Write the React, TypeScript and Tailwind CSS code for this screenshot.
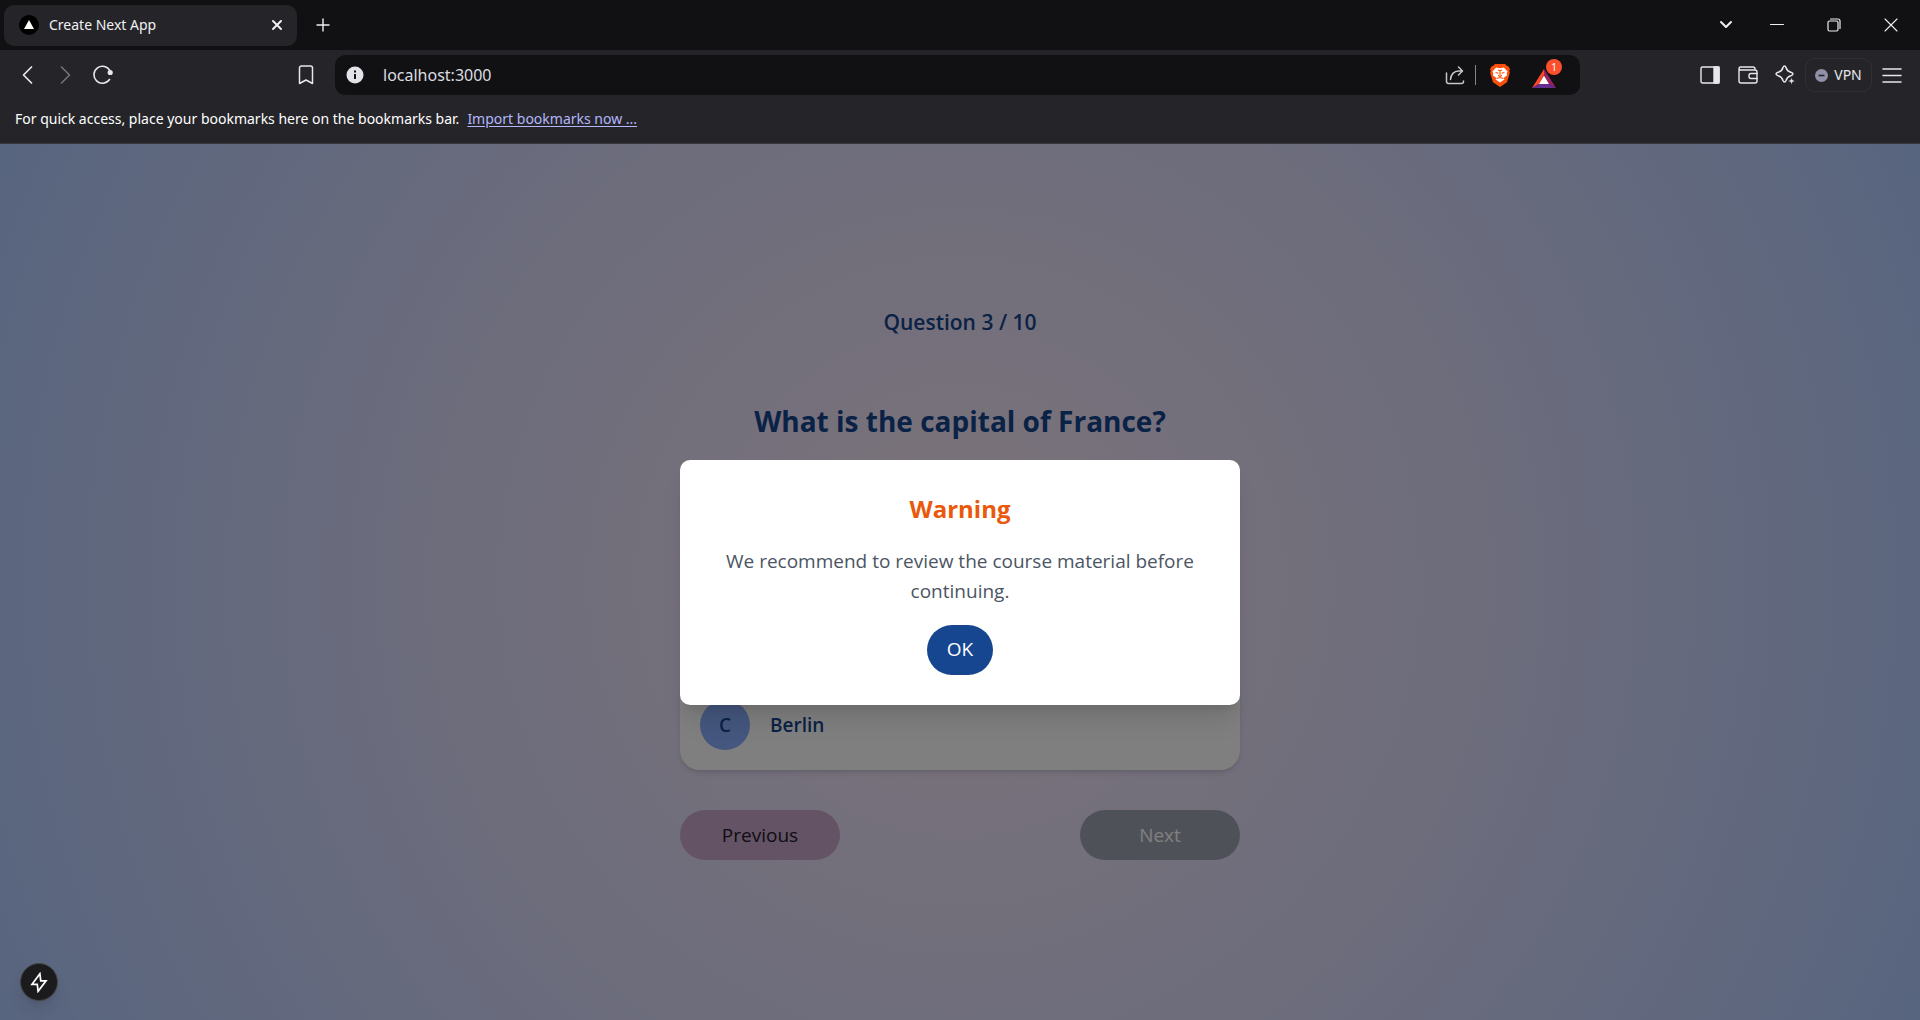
import type { ReactNode } from "react";

function IconButton({ label, className, children }: { label: string; className: string; children: ReactNode }) {
  return (
    <button type="button" aria-label={label} className={`flex shrink-0 items-center justify-center ${className}`}>
      {children}
    </button>
  );
}

const stroke = { fill: "none", stroke: "currentColor", strokeLinecap: "round", strokeLinejoin: "round" } as const;

function TabStrip() {
  return (
    <div className="flex h-[50px] items-center bg-[#111113] pl-1 text-[#f0f0f3]">
      <div className="flex h-[41px] w-[293px] items-center rounded-[10px] bg-[#252529] pl-[15px] pr-[10px]">
        <svg viewBox="0 0 20 20" className="size-5 shrink-0">
          <circle cx="10" cy="10" r="10" fill="#000" />
          <path d="M10 5 15 14H5Z" fill="#fff" />
        </svg>
        <span className="ml-[10px] flex-1 text-sm">Create Next App</span>
        <IconButton label="Close tab" className="size-5">
          <svg viewBox="0 0 12 12" className="size-3" {...stroke} strokeWidth="2">
            <path d="M2 2l8 8M10 2l-8 8" />
          </svg>
        </IconButton>
      </div>
      <IconButton label="New tab" className="ml-4 size-5">
        <svg viewBox="0 0 14 14" className="size-[14px]" {...stroke} strokeWidth="1.4">
          <path d="M7 1v12M1 7h12" />
        </svg>
      </IconButton>
      <div className="ml-auto flex h-full items-center">
        <IconButton label="Search tabs" className="h-full w-[44px]">
          <svg viewBox="0 0 14 10" className="h-[10px] w-[14px]" {...stroke} strokeWidth="2">
            <path d="M2 2l5 5 5-5" />
          </svg>
        </IconButton>
        <IconButton label="Minimize" className="h-full w-[58px]">
          <svg viewBox="0 0 14 14" className="size-[14px]" {...stroke} strokeWidth="1">
            <path d="M.5 6.5h13" />
          </svg>
        </IconButton>
        <IconButton label="Restore" className="h-full w-[56px]">
          <svg viewBox="0 0 14 14" className="size-[14px]" {...stroke} strokeWidth="1.2">
            <rect x="1" y="3" width="10" height="10" rx="1.5" />
            <path d="M3.5 1H11a2 2 0 0 1 2 2v7.500" />
          </svg>
        </IconButton>
        <IconButton label="Close window" className="h-full w-[58px]">
          <svg viewBox="0 0 14 14" className="size-[14px]" {...stroke} strokeWidth="1.1">
            <path d="M1 1l12 12M13 1 1 13" />
          </svg>
        </IconButton>
      </div>
    </div>
  );
}

function ShieldsLogo() {
  return (
    <svg viewBox="0 0 20 23" className="h-[23px] w-5">
      <path d="M5 0h10l2 2h1l2 3-.7 2 .5 2-2.800 9.200L10 23l-7-4.800L.2 9l.5-2L0 5l2-3h1Z" fill="#fb4f0b" />
      <path d="M6 3.500l4 .8 4-.8 3.700 4.200-1 1.300.3 2.500-3.200 2.300.6 1.700-4.400 3-4.400-3 .6-1.700L3 11.500 3.300 9l-1-1.300Z" fill="#fff" />
      <g fill="none" stroke="#fb4f0b" strokeWidth="1.100">
        <path d="M8 6l2 .7 2-.7M10 6.500v4.500M5.500 8.500l3 .8M14.500 8.500l-3 .8M8 11.300l2 1.200 2-1.200M6.500 14.500 10 13.500l3.500 1" />
      </g>
    </svg>
  );
}

function AddressBar() {
  return (
    <div className="flex h-10 flex-1 items-center rounded-[10px] bg-[#111113] pl-[11px] pr-[18px]">
      <IconButton label="Site information" className="size-[18px]">
        <svg viewBox="0 0 18 18" className="size-[18px]">
          <circle cx="9" cy="9" r="8.500" fill="#e2e2e8" />
          <path d="M9 8v5" stroke="#111113" strokeWidth="2" />
          <rect x="8" y="4.500" width="2" height="2" fill="#111113" />
        </svg>
      </IconButton>
      <input
        aria-label="Address"
        defaultValue="localhost:3000"
        className="ml-[19px] h-6 flex-1 bg-transparent text-base text-[#dcdce0] outline-none"
      />
      <IconButton label="Share" className="size-5">
        <svg viewBox="0 0 20 20" className="size-5 text-[#c6c6cb]" {...stroke} strokeWidth="1.5">
          <path d="M1.500 8v8.500a2 2 0 0 0 2 2h13a2 2 0 0 0 2-2V16" />
          <path d="M5.500 14.500c.3-5 3.500-8.500 8-8.500h3.500M13.500 2l4 4-4 4" />
        </svg>
      </IconButton>
      <span className="ml-[10px] h-5 w-px bg-[#84848a]" />
      <IconButton label="Brave Shields" className="ml-[14px] h-[23px] w-5">
        <ShieldsLogo />
      </IconButton>
      <button type="button" aria-label="Brave Rewards" className="relative ml-[22px] h-8 w-[30px] shrink-0">
        <svg viewBox="0 0 24 21" className="mt-[6px] h-[21px] w-[24px]">
          <path d="M12 1 0 20 7 16 12 7Z" fill="#ff4724" />
          <path d="M12 1 24 20 17 16 12 7Z" fill="#9e1f63" />
          <path d="M0 20h24l-7-4H7Z" fill="#662d91" />
          <path d="M12 7.500 7 16h10Z" fill="#fff" />
        </svg>
        <span className="absolute right-0 top-0 flex size-4 items-center justify-center rounded-full bg-[#fc4f2c] text-[10px] text-white">
          1
        </span>
      </button>
    </div>
  );
}

function Toolbar() {
  return (
    <div className="flex h-[50px] items-center text-[#e8e8ec]">
      <div className="flex w-[335px] shrink-0 items-center pl-[18px]">
        <IconButton label="Back" className="size-5">
          <svg viewBox="0 0 20 20" className="size-5" {...stroke} strokeWidth="1.700">
            <path d="M13.500 2 5.500 10l8 8" />
          </svg>
        </IconButton>
        <IconButton label="Forward" className="ml-[17px] size-5 text-[#77777c]">
          <svg viewBox="0 0 20 20" className="size-5" {...stroke} strokeWidth="1.500">
            <path d="M6.500 2l8 8-8 8" />
          </svg>
        </IconButton>
        <IconButton label="Reload" className="ml-[18px] size-5">
          <svg viewBox="0 0 20 20" className="size-5" {...stroke} strokeWidth="1.600">
            <path d="M16.500 14.500a8.500 8.500 0 1 1 .6-8.500" />
            <circle cx="17.200" cy="7.500" r="1.800" fill="currentColor" />
          </svg>
        </IconButton>
        <IconButton label="Bookmark" className="ml-auto mr-[19px] size-5">
          <svg viewBox="0 0 20 20" className="size-5" {...stroke} strokeWidth="1.500">
            <path d="M3.500 18V3a2 2 0 0 1 2-2h9a2 2 0 0 1 2 2v15.500L10 15l-6.500 3.500Z" />
          </svg>
        </IconButton>
      </div>
      <AddressBar />
      <div className="flex w-[340px] shrink-0 items-center justify-end pr-[18px]">
        <IconButton label="Sidebar" className="size-5">
          <svg viewBox="0 0 20 20" className="size-5" {...stroke} strokeWidth="1.400">
            <rect x="1" y="2" width="18" height="16" rx="1.500" />
            <path d="M14 2h5v16h-5Z" fill="currentColor" />
          </svg>
        </IconButton>
        <IconButton label="Wallet" className="ml-[18px] size-5">
          <svg viewBox="0 0 20 20" className="size-5" {...stroke} strokeWidth="1.400">
            <path d="M1 3.500A1.500 1.500 0 0 1 2.500 2H15a2 2 0 0 1 2 2v1M1 3.500V16a2 2 0 0 0 2 2h14a2 2 0 0 0 2-2V7a2 2 0 0 0-2-2H2.500A1.500 1.500 0 0 1 1 3.500Z" />
            <path d="M19 8.500h-6a2 2 0 0 0-2 2v1a2 2 0 0 0 2 2h6" />
          </svg>
        </IconButton>
        <IconButton label="Leo AI" className="ml-[17px] size-5">
          <svg viewBox="0 0 20 20" className="size-5" {...stroke} strokeWidth="1.500">
            <path d="M9.500 1c.8 0 1.200.6 1.500 1.500.8 2.900 1.900 4 4.800 4.800 1.200.4 2.200.8 2.200 1.700s-1 1.300-2.200 1.700c-2.900.8-4 1.900-4.800 4.800-.3.900-.7 1.500-1.500 1.500s-1.200-.6-1.500-1.500c-.8-2.900-1.900-4-4.800-4.800C2 10.300 1 9.900 1 9s1-1.300 2.200-1.700c2.900-.8 4-1.900 4.800-4.800C8.300 1.600 8.700 1 9.500 1Z" />
            <path d="M16.500 12.500l1 2.500 2.500 1-2.500 1-1 2.500-1-2.500-2.500-1 2.500-1Z" fill="currentColor" stroke="#252529" strokeWidth=".4" />
          </svg>
        </IconButton>
        <button
          type="button"
          className="ml-[10px] flex h-[34px] w-[67px] shrink-0 items-center justify-center gap-[6px] rounded-[10px] border border-[#303035] text-sm"
        >
          <svg viewBox="0 0 13 13" className="size-[13px]">
            <circle cx="6.500" cy="6.500" r="6.500" fill="#9090a8" />
            <path d="M3.500 6.500h6" stroke="#252529" strokeWidth="1.600" />
          </svg>
          VPN
        </button>
        <IconButton label="Menu" className="ml-[10px] size-5">
          <svg viewBox="0 0 20 20" className="size-5" {...stroke} strokeWidth="1.500">
            <path d="M1 4h18M1 10.500h18M1 17h18" />
          </svg>
        </IconButton>
      </div>
    </div>
  );
}

function BookmarksBar() {
  return (
    <div className="flex h-[44px] items-center gap-2 border-b border-[#39393d] px-[15px] pb-[5px] text-sm text-white">
      <span>For quick access, place your bookmarks here on the bookmarks bar.</span>
      <a href="#import" className="text-[#b3b6fb] underline underline-offset-2">
        Import bookmarks now ...
      </a>
    </div>
  );
}

function Quiz() {
  return (
    <section className="flex w-[560px] flex-col">
      <p className="text-center text-[21px] leading-[36px] font-semibold text-[#14448c]">Question 3 / 10</p>
      <h1 className="mt-[61px] text-center text-[28px] leading-[40px] font-bold text-[#14448c]">
        What is the capital of France?
      </h1>
      <button
        type="button"
        className="mt-[239px] flex items-center gap-5 rounded-[20px] bg-white p-5 text-left font-semibold text-[#14448c] shadow-md"
      >
        <span className="flex size-[50px] items-center justify-center rounded-full bg-[#8aaefd] text-[19px]">C</span>
        <span className="text-[19px]">Berlin</span>
      </button>
      <div className="mt-10 flex justify-between text-[19px]">
        <button type="button" className="h-[50px] w-40 rounded-full bg-[#c6a6ca] text-[#22182a]">
          Previous
        </button>
        <button type="button" className="h-[50px] w-40 rounded-full bg-[#9ca3af] font-medium text-white">
          Next
        </button>
      </div>
    </section>
  );
}

function WarningDialog() {
  return (
    <div className="absolute inset-0 flex items-center justify-center bg-black/50">
      <div
        role="dialog"
        aria-labelledby="warning-title"
        className="flex w-[560px] flex-col items-center rounded-[10px] bg-white p-[30px] text-center shadow-xl"
      >
        <h2 id="warning-title" className="text-2xl leading-[38px] font-bold text-[#ea580c]">
          Warning
        </h2>
        <p className="mt-[18px] text-[19px] leading-[30px] text-[#4b5563]">
          We recommend to review the course material before continuing.
        </p>
        <button type="button" className="mt-[19px] h-[50px] rounded-full bg-[#15468f] px-5 text-[19px] font-medium text-white">
          OK
        </button>
      </div>
    </div>
  );
}

export default function App() {
  return (
    <div className="flex min-h-screen flex-col bg-[#252529] font-['Noto_Sans','Open_Sans',sans-serif]">
      <header>
        <TabStrip />
        <Toolbar />
        <BookmarksBar />
      </header>
      <main className="relative flex flex-1 items-center justify-center bg-[radial-gradient(circle,#f8e6f4_0%,#dadaf9_50%,#b0caff_100%)] font-['Open_Sans','Noto_Sans',sans-serif]">
        <Quiz />
        <WarningDialog />
        <button
          type="button"
          aria-label="Open developer tools"
          className="absolute bottom-[19px] left-5 flex size-[38px] items-center justify-center rounded-full border border-[#444] bg-[#1b1b1d] text-white shadow-lg"
        >
          <svg viewBox="0 0 20 24" className="h-[21px] w-[18px]" fill="none" stroke="currentColor" strokeWidth="2">
            <path d="M11 2 2 14h6l1 8 9-12h-6Z" />
          </svg>
        </button>
      </main>
    </div>
  );
}
